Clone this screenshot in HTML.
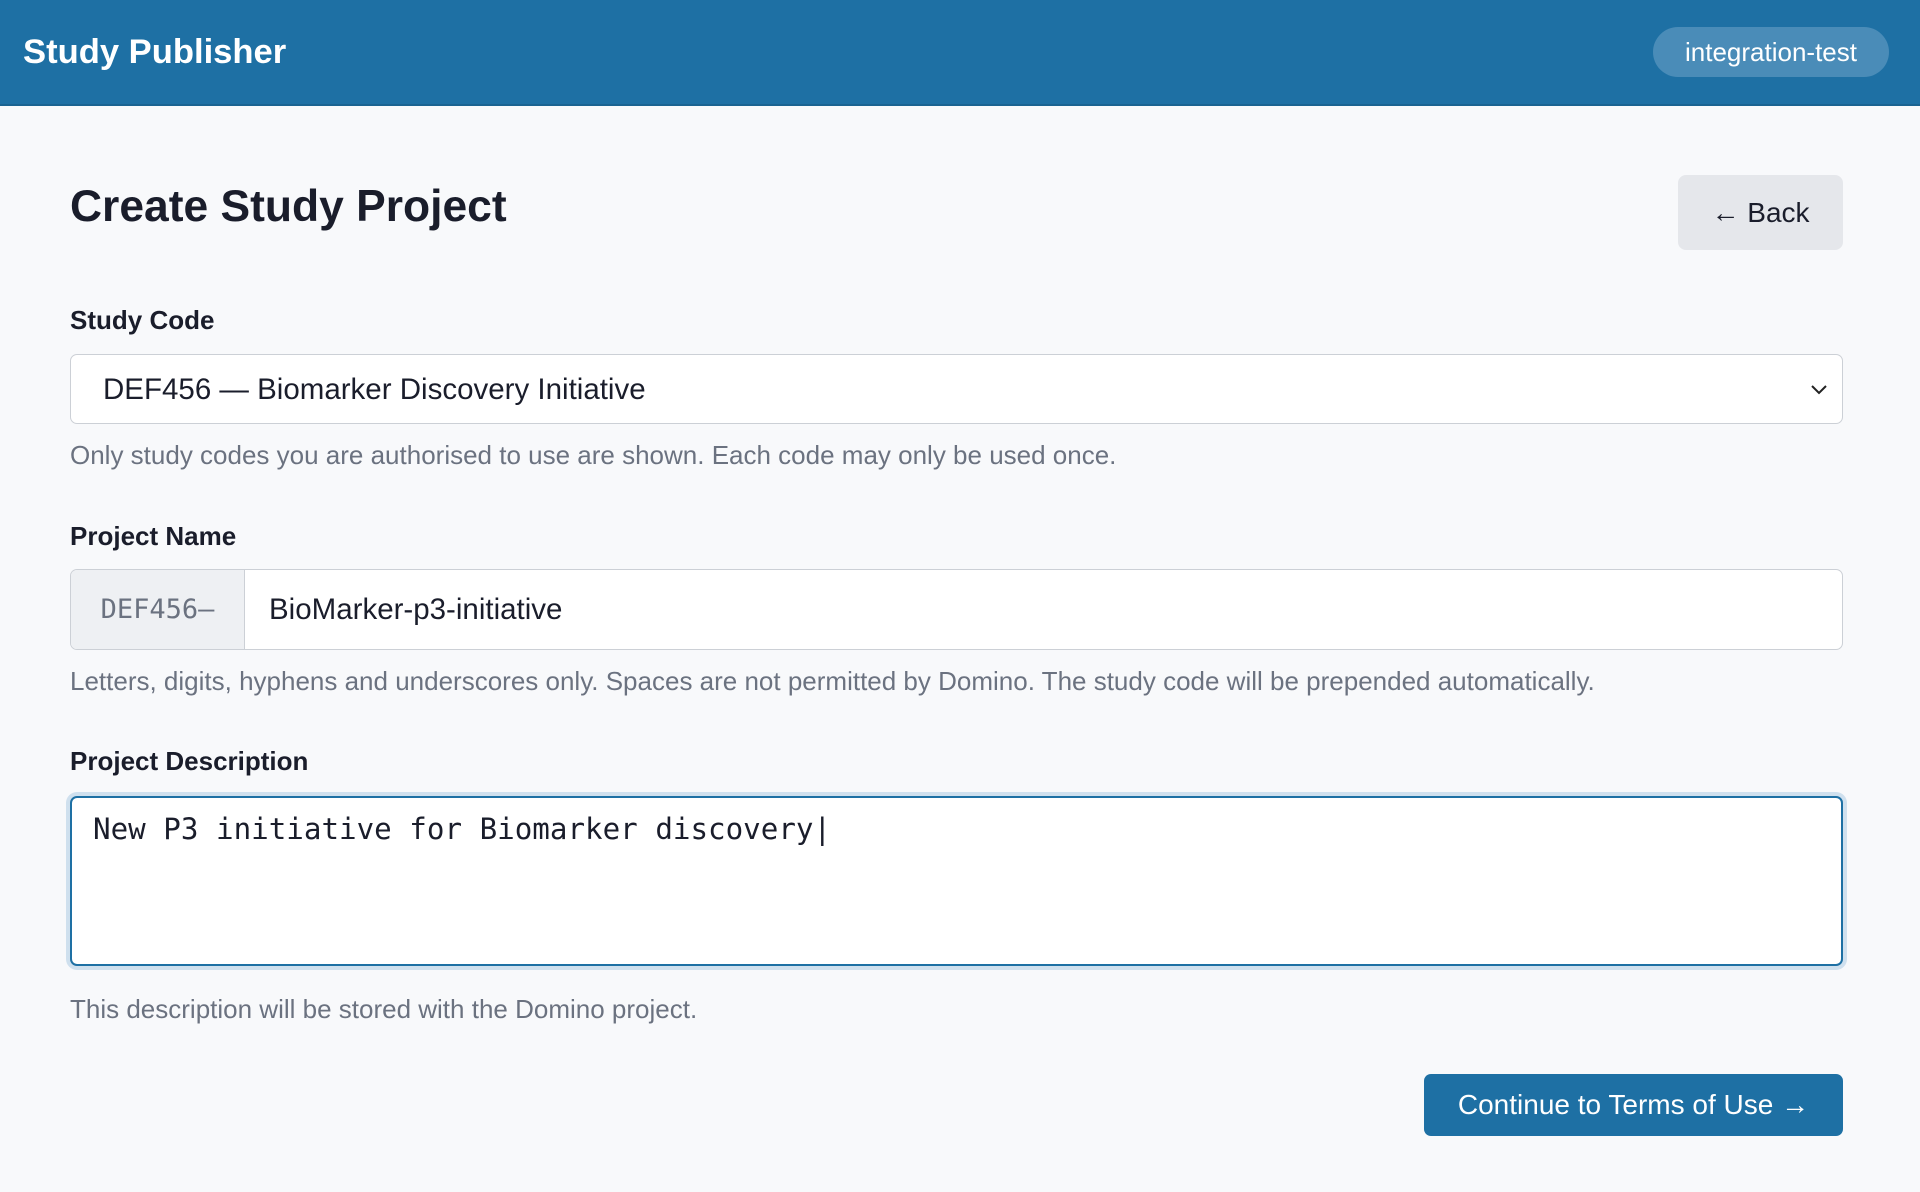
<!DOCTYPE html>
<html><head><style>
*{box-sizing:border-box;margin:0;padding:0}
body{width:1920px;height:1192px;background:#f8f9fb;font-family:"Liberation Sans",sans-serif;color:#1a1d2b;position:relative;overflow:hidden}
.hdr{position:absolute;left:0;top:0;width:1920px;height:106px;background:#1e70a4;border-bottom:2px solid #1a6391}
.brand{position:absolute;left:23px;top:33px;color:#fff;font-weight:bold;font-size:34.6px}
.badge{position:absolute;left:1653px;top:27px;width:236px;height:50px;border-radius:25px;background:#4a8cb8;color:#fff;font-size:26px;text-align:center;line-height:50px}
.abs{position:absolute}
h1{position:absolute;left:70px;top:182px;font-size:44.4px;font-weight:bold;color:#1a1d2b}
.back{left:1678px;top:175px;width:165px;height:75px;background:#e5e7eb;border-radius:8px;font-size:28px;text-align:center;line-height:75px;color:#1a1d2b}
.lbl{left:70px;font-size:26px;font-weight:bold;color:#1a1d2b}
.hint{left:70px;font-size:26px;color:#6b7280}
.sel{left:70px;top:354px;width:1773px;height:70px;border:1.5px solid #ccd0d6;border-radius:7px;background:#fff;font-size:29.5px;line-height:69px;padding-left:32px}
.grp{left:70px;top:569px;width:1773px;height:81px;border:1.5px solid #ccd0d6;border-radius:7px;background:#fff;overflow:hidden}
.pre{position:absolute;left:0;top:0;width:174px;height:100%;background:#eef0f3;border-right:1.5px solid #ccd0d6;font-family:"DejaVu Sans Mono",monospace;font-size:27px;color:#6b7280;line-height:80px;text-align:center}
.val{position:absolute;left:198px;top:0;font-size:29.5px;line-height:80px}
.ta{left:70px;top:796px;width:1773px;height:170px;border:2px solid #1e70a4;border-radius:7px;background:#fff;box-shadow:0 0 0 4px #cfe0ee;font-family:"DejaVu Sans Mono",monospace;font-size:29.2px;padding:14px 21px}
.btn{left:1424px;top:1074px;width:419px;height:62px;background:#1e70a4;border-radius:7px;color:#fff;font-size:28px;text-align:center;line-height:62px}
</style></head><body>
<div class="hdr"><div class="brand">Study Publisher</div><div class="badge">integration-test</div></div>
<h1>Create Study Project</h1>
<div class="abs back">← Back</div>
<div class="abs lbl" style="top:305px">Study Code</div>
<div class="abs sel">DEF456 — Biomarker Discovery Initiative
<svg style="position:absolute;right:14px;top:29px" width="18" height="12" viewBox="0 0 18 12"><path d="M2 2l7 7 7-7" fill="none" stroke="#222" stroke-width="2"/></svg></div>
<div class="abs hint" style="top:440px">Only study codes you are authorised to use are shown. Each code may only be used once.</div>
<div class="abs lbl" style="top:521px">Project Name</div>
<div class="abs grp"><div class="pre">DEF456–</div><div class="val">BioMarker-p3-initiative</div></div>
<div class="abs hint" style="top:666px">Letters, digits, hyphens and underscores only. Spaces are not permitted by Domino. The study code will be prepended automatically.</div>
<div class="abs lbl" style="top:746px">Project Description</div>
<div class="abs ta">New P3 initiative for Biomarker discovery|</div>
<div class="abs hint" style="top:994px">This description will be stored with the Domino project.</div>
<div class="abs btn">Continue to Terms of Use →</div>
</body></html>
